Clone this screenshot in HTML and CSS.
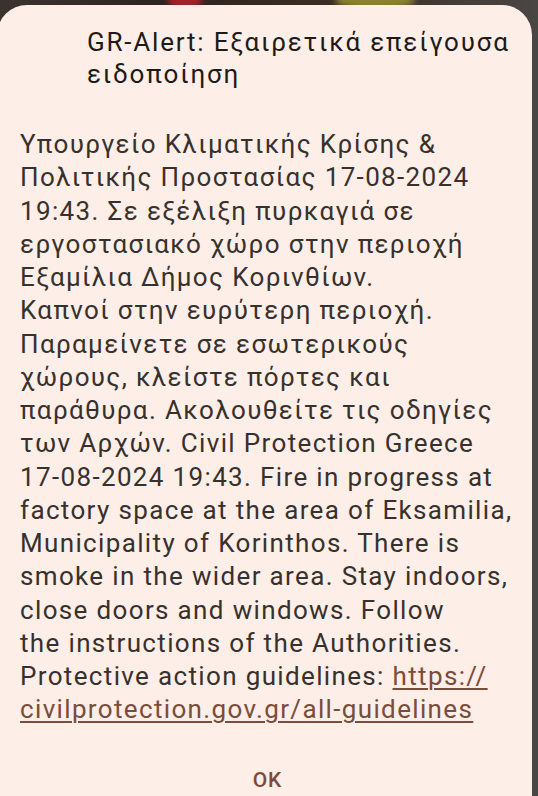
FILE: index.html
```html
<!DOCTYPE html>
<html lang="el">
<head>
<meta charset="utf-8">
<link rel="stylesheet" href="styles.css">
</head>
<body>
<div class="backdrop">
  <span class="blob blob-red"></span>
  <span class="blob blob-yellow"></span>
</div>
<div class="dialog">
  <h1 class="title">GR-Alert: Εξαιρετικά επείγουσα<br>ειδοποίηση</h1>
  <p class="message">Υπουργείο Κλιματικής Κρίσης &amp;<br>Πολιτικής Προστασίας 17-08-2024<br>19:43. Σε εξέλιξη πυρκαγιά σε<br>εργοστασιακό χώρο στην περιοχή<br>Εξαμίλια Δήμος Κορινθίων.<br>Καπνοί στην ευρύτερη περιοχή.<br>Παραμείνετε σε εσωτερικούς<br>χώρους, κλείστε πόρτες και<br>παράθυρα. Ακολουθείτε τις οδηγίες<br>των Αρχών. Civil Protection Greece<br>17-08-2024 19:43. Fire in progress at<br>factory space at the area of Eksamilia,<br>Municipality of Korinthos. There is<br>smoke in the wider area. Stay indoors,<br>close doors and windows. Follow<br>the instructions of the Authorities.<br>Protective action guidelines: <a class="link" href="#">https://<br>civilprotection.gov.gr/all-guidelines</a></p>
  <div class="actions"><span class="ok">OK</span></div>
</div>
</body>
</html>
```
FILE: styles.css
```css
html, body {
  margin: 0;
  padding: 0;
  width: 538px;
  height: 796px;
  overflow: hidden;
  background: #3a3431;
}
body {
  position: relative;
  font-family: Roboto, "Noto Sans", sans-serif;
}
.backdrop {
  position: absolute;
  left: 0;
  top: 0;
  width: 538px;
  height: 796px;
  background: linear-gradient(90deg, #3b3330 0%, #2e2420 30%, #3a2c22 60%, #4a4644 100%);
}
.blob {
  position: absolute;
  top: -10px;
  height: 20px;
  border-radius: 50%;
  filter: blur(3px);
}
.blob-red {
  left: 168px;
  width: 34px;
  background: #a3222a;
}
.blob-yellow {
  left: 335px;
  width: 80px;
  background: #8a8230;
}
.dialog {
  position: relative;
  margin: 5px 6px 0 -3px;
  height: 820px;
  background: #fdeee7;
  border-radius: 30px;
  box-sizing: border-box;
  padding: 21px 0 0 23px;
}
.title {
  margin: 0;
  padding-left: 67px;
  font-size: 26px;
  line-height: 32px;
  font-weight: 400;
  letter-spacing: 1.8px;
  color: #1e1a18;
}
.message {
  margin: 38px 0 0 0;
  font-size: 26px;
  line-height: 33.25px;
  letter-spacing: 1.35px;
  color: #37312e;
  white-space: nowrap;
}
.link {
  color: #7a4c3b;
  text-decoration: underline;
  text-decoration-thickness: 1.5px;
  text-underline-offset: 3px;
}
.actions {
  display: flex;
  justify-content: center;
  margin-top: 41px;
  padding-right: 17px;
}
.ok {
  font-size: 21px;
  font-weight: 500;
  letter-spacing: 0.8px;
  color: #7b4b38;
}
```
